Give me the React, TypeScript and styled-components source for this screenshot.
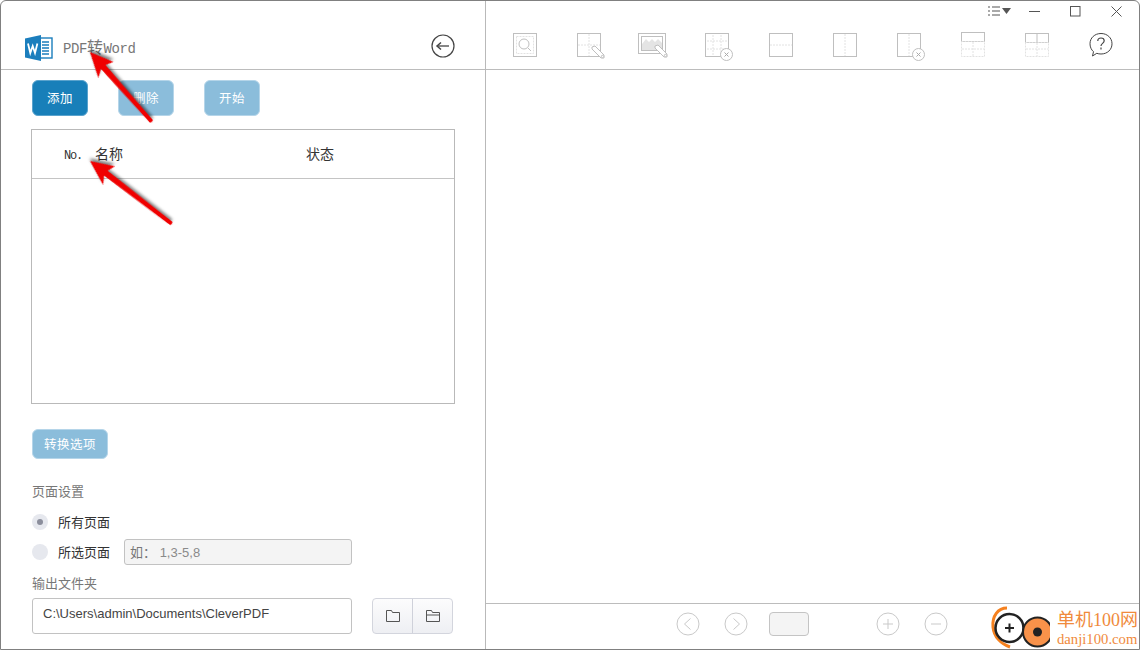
import React from "react";
import styled, { createGlobalStyle } from "styled-components";

const Global = createGlobalStyle`
  html, body { margin: 0; padding: 0; background: #fff; }
  * { box-sizing: border-box; }
`;

const CJK = `"Noto Sans CJK SC", sans-serif`;
const SANS = `"Liberation Sans", "Noto Sans CJK SC", sans-serif`;

const Page = styled.div`
  position: relative;
  width: 1140px;
  height: 650px;
  overflow: hidden;
  background: #fff;
`;
const Frame = styled.div`
  width: 1140px;
  height: 650px;
  display: flex;
  border: 1px solid #808080;
  border-radius: 6px 6px 0 0;
  font-family: ${CJK};
  background: #fff;
`;
const LeftPane = styled.section`
  width: 485px;
  flex: none;
  border-right: 1px solid #b9b9b9;
  display: flex;
  flex-direction: column;
`;
const LeftHeader = styled.header`
  height: 69px;
  flex: none;
  border-bottom: 1px solid #bcbcbc;
  display: flex;
  align-items: flex-end;
  padding: 0 30px 7px 24px;
`;
const Title = styled.h1`
  margin: 0 0 3px 10px;
  font: normal 14px/20px "Liberation Mono", monospace;
  letter-spacing: -0.4px;
  color: #777;
  flex: 1;
  span { font: 16px/20px ${CJK}; letter-spacing: 0.4px; }
`;
const BackSlot = styled.div`
  display: flex;
  margin-bottom: 4px;
`;
const LeftBody = styled.div`
  flex: 1;
  padding: 10px 30px 0 31px;
  display: flex;
  flex-direction: column;
`;
const ButtonRow = styled.div`
  display: flex;
  gap: 30px;
`;
const ActionButton = styled.button<{ $active?: boolean; $wide?: boolean }>`
  width: ${(p) => (p.$wide ? "76px" : "56px")};
  height: ${(p) => (p.$wide ? "30px" : "36px")};
  padding: 0;
  border-radius: 6px;
  border: 1px solid ${(p) => (p.$active ? "#5aa3cd" : "#b5d5e9")};
  background: ${(p) => (p.$active ? "#187fb9" : "#8bbddb")};
  color: #fff;
  font: 12.5px/1 ${CJK};
  letter-spacing: 0.5px;
`;
const FileTable = styled.div`
  margin: 13px 0 0 -1px;
  width: 424px;
  height: 275px;
  border: 1px solid #b9b9b9;
`;
const TableHead = styled.div`
  height: 49px;
  border-bottom: 1px solid #c4c4c4;
  display: flex;
  align-items: center;
  padding: 0 0 2px 32px;
  color: #333;
  font-size: 14px;
`;
const NoCol = styled.span`
  width: 31px;
  font: 12px/1 "Liberation Mono", monospace;
  letter-spacing: -1.2px;
  padding-top: 5px;
`;
const NameCol = styled.span`
  width: 211px;
`;
const OptionsRow = styled.div`
  margin-top: 25px;
`;
const SectionLabel = styled.div<{ $top: number }>`
  margin-top: ${(p) => p.$top}px;
  font-size: 13px;
  line-height: 18px;
  color: #777;
`;
const RadioRow = styled.div<{ $top: number }>`
  margin-top: ${(p) => p.$top}px;
  height: 26px;
  padding-bottom: 2px;
  display: flex;
  align-items: center;
  font-size: 13px;
  color: #333;
`;
const RadioDot = styled.span<{ $on?: boolean }>`
  width: 16px;
  height: 16px;
  margin: 2px 10px 0 0;
  border-radius: 50%;
  background: #e6e8ee;
  display: flex;
  align-items: center;
  justify-content: center;
  &::after {
    content: "";
    width: 6px;
    height: 6px;
    border-radius: 50%;
    background: ${(p) => (p.$on ? "#8b8e9c" : "transparent")};
  }
`;
const RangeInput = styled.div`
  margin: 2px 0 0 14px;
  width: 228px;
  height: 26px;
  flex: none;
  border: 1px solid #c2c2c2;
  border-radius: 3px;
  background: #f4f4f4;
  color: #8a8a8a;
  font: 13px/24px ${SANS};
  padding-left: 5px;
  white-space: pre;
  b { font: 13px/24px ${CJK}; color: #777; }
`;
const OutputRow = styled.div`
  margin-top: 6px;
  display: flex;
  gap: 20px;
`;
const PathInput = styled.div`
  width: 320px;
  height: 36px;
  border: 1px solid #c2c2c2;
  border-radius: 3px;
  background: #fff;
  color: #444;
  font: 13px/30px ${SANS};
  padding-left: 10px;
`;
const FolderGroup = styled.div`
  width: 81px;
  height: 36px;
  display: flex;
  border: 1px solid #d3d5dd;
  border-radius: 4px;
  background: linear-gradient(#fcfcfd, #eeeff3);
`;
const FolderButton = styled.div`
  flex: 1;
  display: flex;
  align-items: center;
  justify-content: center;
  & + & { border-left: 1px solid #cfd1da; }
`;

const RightPane = styled.section`
  flex: 1;
  display: flex;
  flex-direction: column;
  min-width: 0;
`;
const RightHeader = styled.header`
  height: 69px;
  flex: none;
  border-bottom: 1px solid #bcbcbc;
  display: flex;
  flex-direction: column;
`;
const WindowControls = styled.div`
  height: 31px;
  flex: none;
  display: flex;
  justify-content: flex-end;
  padding: 0 2px 0 0;
`;
const ControlIcon = styled.div<{ $w: number }>`
  width: ${(p) => p.$w}px;
  height: 20px;
  display: flex;
  align-items: center;
  justify-content: center;
`;
const Toolbar = styled.div`
  display: flex;
  padding-left: 7px;
`;
const ToolSlot = styled.svg`
  width: 64px;
  height: 32px;
  flex: none;
  display: block;
  fill: none;
`;
const Canvas = styled.div`
  flex: 1;
`;
const BottomBar = styled.footer`
  height: 46px;
  flex: none;
  border-top: 1px solid #bcbcbc;
  display: flex;
  align-items: center;
  padding: 0 0 6px 190px;
`;
const RoundButton = styled.svg<{ $gap: number }>`
  width: 24px;
  height: 24px;
  flex: none;
  margin-right: ${(p) => p.$gap}px;
  fill: none;
  stroke: #c9c9c9;
`;
const PageBox = styled.div`
  width: 40px;
  height: 24px;
  margin-right: 67px;
  border: 1px solid #c4c4c4;
  border-radius: 4px;
  background: #f4f4f4;
`;
const Overlay = styled.svg`
  position: absolute;
  left: 0;
  top: 0;
  width: 1140px;
  height: 650px;
  pointer-events: none;
`;
const Watermark = styled.div`
  position: absolute;
  left: 990px;
  top: 606px;
  width: 150px;
  height: 44px;
  display: flex;
`;
const WatermarkText = styled.div`
  margin-left: 67px;
  padding-top: 4px;
  color: #f08a3c;
  white-space: nowrap;
  font-family: "Liberation Serif", "Noto Sans CJK SC", serif;
`;
const WatermarkBig = styled.div`
  font-size: 18px;
  line-height: 21px;
`;
const WatermarkSmall = styled.div`
  font-size: 14.7px;
  line-height: 16px;
`;

const G = "#bfbfbf";
const D = "#e2e2e2";

const WordLogo = () => (
  <svg width="28" height="28" viewBox="0 0 28 28">
    <rect x="14" y="4" width="13" height="20" fill="#fff" stroke="#1b7ebd" strokeWidth="1.4" />
    <path d="M17 8h7M17 11h7M17 14h7M17 17h7M17 20h7" stroke="#1b7ebd" strokeWidth="1.6" />
    <path d="M0 4.5 16 1v26L0 23.5z" fill="#1b7ebd" />
    <path d="M3 9.5 5.3 19l2.4-7 2.3 7 2.4-9.500" fill="none" stroke="#fff" strokeWidth="1.8" />
  </svg>
);

const BackIcon = () => (
  <svg width="24" height="24" viewBox="0 0 24 24" fill="none" stroke="#444">
    <circle cx="12" cy="12" r="11" strokeWidth="1.2" />
    <path d="M18 12H6.500" strokeWidth="1.3" />
    <path d="M10 8.500 6 12l4 3.500" strokeWidth="1.5" />
  </svg>
);

const Pencil = ({ x, y }: { x: number; y: number }) => (
  <g transform={`translate(${x} ${y})`} stroke={G} fill="#fff">
    <path d="M0 0 3 -1 12 8 12 11 9 11 0 2z" />
    <circle cx="10.500" cy="9.500" r="1.200" />
  </g>
);
const CloseBadge = ({ x, y }: { x: number; y: number }) => (
  <g transform={`translate(${x} ${y})`} stroke={G}>
    <circle r="6" fill="#fff" />
    <path d="M-2 -2 2 2M2 -2 -2 2" stroke="#aaa" />
  </g>
);

const Tools = () => (
  <Toolbar>
    <ToolSlot viewBox="0 0 64 32">
      <rect x="20.500" y="1.500" width="23" height="23" stroke={G} />
      <rect x="23.500" y="4.500" width="17" height="17" stroke={D} strokeDasharray="2 1" />
      <circle cx="31" cy="12" r="5" stroke={G} />
      <path d="M35 16l3 3" stroke={G} />
    </ToolSlot>
    <ToolSlot viewBox="0 0 64 32">
      <rect x="20.500" y="1.500" width="23" height="23" stroke={G} />
      <path d="M21 13h22M32 2v22" stroke={D} strokeDasharray="2 1" />
      <Pencil x={35} y={15} />
    </ToolSlot>
    <ToolSlot viewBox="0 0 64 32">
      <rect x="17.500" y="1.500" width="27" height="20" stroke={G} />
      <rect x="20.500" y="4.500" width="21" height="14" stroke={G} />
      <path d="M21 12 25 7l3 3 3-3 3 3 3-3 4 4v7H21z" fill="#e4e4e4" />
      <Pencil x={34} y={14} />
    </ToolSlot>
    <ToolSlot viewBox="0 0 64 32">
      <rect x="20.500" y="1.500" width="23" height="23" stroke={G} />
      <path d="M22 9h20M22 17h20M28 3v20M36 3v20" stroke={D} strokeDasharray="2 1" />
      <CloseBadge x={41.500} y={22.500} />
    </ToolSlot>
    <ToolSlot viewBox="0 0 64 32">
      <rect x="20.500" y="1.500" width="23" height="23" stroke={G} />
      <path d="M21 13h22" stroke={D} strokeDasharray="2 1" />
    </ToolSlot>
    <ToolSlot viewBox="0 0 64 32">
      <rect x="20.500" y="1.500" width="23" height="23" stroke={G} />
      <path d="M32 2v22" stroke={D} strokeDasharray="2 1" />
    </ToolSlot>
    <ToolSlot viewBox="0 0 64 32">
      <rect x="20.500" y="1.500" width="23" height="23" stroke={G} />
      <path d="M32 2v22" stroke={D} strokeDasharray="2 1" />
      <CloseBadge x={41.500} y={22.500} />
    </ToolSlot>
    <ToolSlot viewBox="0 0 64 32">
      <rect x="20.500" y="0.500" width="23" height="9" stroke={G} />
      <rect x="20.500" y="9.500" width="23" height="15" stroke={D} strokeDasharray="2 1" />
      <path d="M21 17h22M32 10v14" stroke={D} strokeDasharray="2 1" />
    </ToolSlot>
    <ToolSlot viewBox="0 0 64 32">
      <rect x="20.500" y="1.500" width="23" height="9" stroke={G} />
      <path d="M32 2v9" stroke={G} />
      <rect x="20.500" y="10.500" width="23" height="14" stroke={D} strokeDasharray="2 1" />
      <path d="M21 17h22M32 11v13" stroke={D} strokeDasharray="2 1" />
    </ToolSlot>
    <ToolSlot viewBox="0 0 64 32">
      <path
        d="M32 1.500c6.300 0 11 4.400 11 10.300S38.300 22 32 22c-1.500 0-2.900-.2-4.200-.7L23.500 24l1-4.300C22.300 17.800 21 15 21 11.800 21 5.900 25.700 1.500 32 1.500z"
        stroke="#444"
      />
      <path d="M28.800 9c0-1.900 1.400-3 3.200-3s3.200 1.100 3.200 2.800c0 2.600-3.200 2.500-3.200 5.200" stroke="#444" strokeWidth="1.200" />
      <path d="M32 15.500v2" stroke="#444" strokeWidth="1.200" />
    </ToolSlot>
  </Toolbar>
);

const Arrow = ({ x1, y1, x2, y2 }: { x1: number; y1: number; x2: number; y2: number }) => {
  const a = (Math.atan2(y1 - y2, x1 - x2) * 180) / Math.PI;
  const len = Math.hypot(x1 - x2, y1 - y2);
  return (
    <g transform={`translate(${x1} ${y1}) rotate(${a})`}>
      <path
        d={`M0 0 -25 -11 -20 -3 ${-len + 1} -2 ${-len} 0 ${-len + 1} 2 -20 3 -23 11z`}
        fill="#f00000"
        style={{ filter: "drop-shadow(2px 2px 1.500px rgba(0,0,0,.5))" }}
      />
    </g>
  );
};

export default function App() {
  return (
    <Page>
      <Global />
      <Frame>
        <LeftPane>
          <LeftHeader>
            <WordLogo />
            <Title>
              PDF<span>转</span>Word
            </Title>
            <BackSlot>
              <BackIcon />
            </BackSlot>
          </LeftHeader>
          <LeftBody>
            <ButtonRow>
              <ActionButton $active>添加</ActionButton>
              <ActionButton>删除</ActionButton>
              <ActionButton>开始</ActionButton>
            </ButtonRow>
            <FileTable>
              <TableHead>
                <NoCol>No.</NoCol>
                <NameCol>名称</NameCol>
                <span>状态</span>
              </TableHead>
            </FileTable>
            <OptionsRow>
              <ActionButton $wide>转换选项</ActionButton>
            </OptionsRow>
            <SectionLabel $top={23}>页面设置</SectionLabel>
            <RadioRow $top={9}>
              <RadioDot $on />
              所有页面
            </RadioRow>
            <RadioRow $top={4}>
              <RadioDot />
              所选页面
              <RangeInput>
                <b>如：</b> 1,3-5,8
              </RangeInput>
            </RadioRow>
            <SectionLabel $top={9}>输出文件夹</SectionLabel>
            <OutputRow>
              <PathInput>C:\Users\admin\Documents\CleverPDF</PathInput>
              <FolderGroup>
                <FolderButton>
                  <svg width="16" height="14" viewBox="0 0 16 14" fill="none" stroke="#555">
                    <path d="M1.500 12.500V1.500h5l1 2h7v9z" />
                  </svg>
                </FolderButton>
                <FolderButton>
                  <svg width="16" height="14" viewBox="0 0 16 14" fill="none" stroke="#555">
                    <path d="M1.500 12.500V1.500h5l1 2h7v9zM1.500 6h13" />
                  </svg>
                </FolderButton>
              </FolderGroup>
            </OutputRow>
          </LeftBody>
        </LeftPane>
        <RightPane>
          <RightHeader>
            <WindowControls>
              <ControlIcon $w={28}>
                <svg width="24" height="10" viewBox="0 0 24 10" fill="none" stroke="#555">
                  <path d="M0 1h2M4 1h8M0 5h2M4 5h8M0 9h2M4 9h8" />
                  <path d="M14 2h9l-4.500 6z" fill="#555" stroke="none" />
                </svg>
              </ControlIcon>
              <ControlIcon $w={41}>
                <svg width="11" height="11" viewBox="0 0 11 11" stroke="#555">
                  <path d="M0 5.500h11" />
                </svg>
              </ControlIcon>
              <ControlIcon $w={41}>
                <svg width="11" height="11" viewBox="0 0 11 11" fill="none" stroke="#555">
                  <rect x=".5" y=".5" width="9.500" height="9.500" />
                </svg>
              </ControlIcon>
              <ControlIcon $w={41}>
                <svg width="11" height="11" viewBox="0 0 11 11" fill="none" stroke="#555">
                  <path d="M.5.5l10 10M10.500.5l-10 10" />
                </svg>
              </ControlIcon>
            </WindowControls>
            <Tools />
          </RightHeader>
          <Canvas />
          <BottomBar>
            <RoundButton $gap={24} viewBox="0 0 24 24">
              <circle cx="12" cy="12" r="11" />
              <path d="M14.500 6.500 8.500 12l6 5.500" />
            </RoundButton>
            <RoundButton $gap={21} viewBox="0 0 24 24">
              <circle cx="12" cy="12" r="11" />
              <path d="M9.500 6.500 15.500 12l-6 5.500" />
            </RoundButton>
            <PageBox />
            <RoundButton $gap={24} viewBox="0 0 24 24">
              <circle cx="12" cy="12" r="11" />
              <path d="M12 7v10M7 12h10" />
            </RoundButton>
            <RoundButton $gap={0} viewBox="0 0 24 24">
              <circle cx="12" cy="12" r="11" />
              <path d="M7 12h10" />
            </RoundButton>
          </BottomBar>
        </RightPane>
      </Frame>
      <Overlay viewBox="0 0 1140 650">
        <Arrow x1={90} y1={52} x2={152} y2={122} />
        <Arrow x1={90} y1={161} x2={172} y2={224} />
      </Overlay>
      <Watermark>
        <svg width="60" height="44" viewBox="0 0 60 44" style={{ position: "absolute", left: 0, top: 0 }} fill="none">
          <path d="M17 2C8 2 2 10 3 21c1 10 8 17 17 20" stroke="#f5811f" strokeWidth="3" />
          <circle cx="19.500" cy="22" r="14" stroke="#222" strokeWidth="2.500" fill="#fff" />
          <path d="M15 22h9M19.500 17.500v9" stroke="#222" strokeWidth="2" />
          <circle cx="47.500" cy="26" r="14.500" fill="#f8924a" stroke="#222" strokeWidth="2" />
          <circle cx="47.500" cy="26" r="4.500" fill="#222" />
        </svg>
        <WatermarkText>
          <WatermarkBig>单机100网</WatermarkBig>
          <WatermarkSmall>danji100.com</WatermarkSmall>
        </WatermarkText>
      </Watermark>
    </Page>
  );
}
